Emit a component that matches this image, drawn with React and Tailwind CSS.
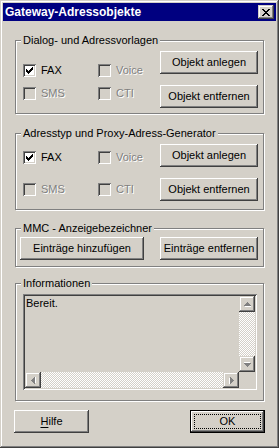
import React from 'react';

const raised =
  'shadow-[inset_-1px_-1px_#404040,inset_1px_1px_#fff,inset_-2px_-2px_#808080,inset_2px_2px_#d4d0c8]';
const sunken =
  'shadow-[inset_1px_1px_#808080,inset_-1px_-1px_#fff,inset_2px_2px_#404040,inset_-2px_-2px_#d4d0c8]';
const scrollBtn =
  'shadow-[inset_-1px_-1px_#404040,inset_1px_1px_#d4d0c8,inset_-2px_-2px_#808080,inset_2px_2px_#fff]';
const track =
  'bg-[conic-gradient(#fff_25%,#d4d0c8_0_50%,#fff_0_75%,#d4d0c8_0)] bg-[length:2px_2px]';

function Check({ label, checked, disabled }) {
  return (
    <div className="flex items-center gap-[5px] h-[13px]">
      <div className={`w-[13px] h-[13px] shrink-0 flex items-center justify-center ${sunken} ${disabled ? 'bg-[#d4d0c8]' : 'bg-white'}`}>
        {checked && (
          <svg width="7" height="7" viewBox="0 0 7 7" shapeRendering="crispEdges">
            <rect x="6" y="0" width="1" height="1" />
            <rect x="5" y="1" width="2" height="1" />
            <rect x="0" y="2" width="1" height="1" />
            <rect x="4" y="2" width="3" height="1" />
            <rect x="0" y="3" width="2" height="1" />
            <rect x="3" y="3" width="3" height="1" />
            <rect x="0" y="4" width="5" height="1" />
            <rect x="1" y="5" width="3" height="1" />
            <rect x="2" y="6" width="1" height="1" />
          </svg>
        )}
      </div>
      <span className={disabled ? 'text-[#808080] [text-shadow:1px_1px_#fff]' : 'text-black'}>{label}</span>
    </div>
  );
}

function Btn({ children, w = 'w-[98px]' }) {
  return (
    <div className={`${w} h-[23px] shrink-0 flex items-center justify-center bg-[#d4d0c8] ${raised}`}>
      <span>{children}</span>
    </div>
  );
}

function Group({ title, children }) {
  return (
    <fieldset className="border border-[#808080] shadow-[1px_1px_#fff,inset_1px_1px_#fff]">
      <legend className="ml-[5px] px-[2px] leading-[13px] bg-[#d4d0c8]">{title}</legend>
      {children}
    </fieldset>
  );
}

function ObjectGroup({ title, boxTop, rowGap, pb }) {
  return (
    <Group title={title}>
      <div className={`flex justify-between pt-[4px] pl-[7px] pr-[5px] ${pb}`}>
        <div className={`flex flex-col ${boxTop} ${rowGap}`}>
          <div className="flex">
            <div className="w-[75px]"><Check label="FAX" checked /></div>
            <Check label="Voice" disabled />
          </div>
          <div className="flex">
            <div className="w-[75px]"><Check label="SMS" disabled /></div>
            <Check label="CTI" disabled />
          </div>
        </div>
        <div className="flex flex-col gap-[11px]">
          <Btn>Objekt anlegen</Btn>
          <Btn>Objekt entfernen</Btn>
        </div>
      </div>
    </Group>
  );
}

function Arrow({ dir }) {
  const rot = { up: 0, down: 180, left: 270, right: 90 }[dir];
  return (
    <svg width="7" height="7" viewBox="0 0 7 7" shapeRendering="crispEdges" style={{ transform: `rotate(${rot}deg)` }}>
      <g fill="#fff" transform="translate(1 1)">
        <rect x="3" y="1" width="1" height="1" />
        <rect x="2" y="2" width="3" height="1" />
        <rect x="1" y="3" width="5" height="1" />
        <rect x="0" y="4" width="7" height="1" />
      </g>
      <g fill="#808080">
        <rect x="3" y="1" width="1" height="1" />
        <rect x="2" y="2" width="3" height="1" />
        <rect x="1" y="3" width="5" height="1" />
        <rect x="0" y="4" width="7" height="1" />
      </g>
    </svg>
  );
}

function SBtn({ dir }) {
  return (
    <div className={`w-[16px] h-[16px] bg-[#d4d0c8] flex items-center justify-center ${scrollBtn}`}>
      <Arrow dir={dir} />
    </div>
  );
}

export default function App() {
  return (
    <div
      className="w-[279px] h-[448px] bg-[#d4d0c8] p-[3px] flex flex-col text-[11px] leading-[13px] text-black shadow-[inset_-1px_-1px_#404040,inset_1px_1px_#d4d0c8,inset_-2px_-2px_#808080,inset_2px_2px_#fff]"
      style={{ fontFamily: '"Liberation Sans", Arial, sans-serif' }}
    >
      <div className="h-[18px] bg-[#000080] flex items-center justify-between pl-[2px] pr-[2px]">
        <span className="text-white font-bold text-[12px] leading-[14px]">Gateway-Adressobjekte</span>
        <div className={`w-[16px] h-[14px] bg-[#d4d0c8] flex items-center justify-center ${scrollBtn}`}>
          <svg width="8" height="7" viewBox="0 0 8 7" shapeRendering="crispEdges">
            <rect x="0" y="0" width="2" height="1" />
            <rect x="6" y="0" width="2" height="1" />
            <rect x="1" y="1" width="2" height="1" />
            <rect x="5" y="1" width="2" height="1" />
            <rect x="2" y="2" width="4" height="1" />
            <rect x="3" y="3" width="2" height="1" />
            <rect x="2" y="4" width="4" height="1" />
            <rect x="1" y="5" width="2" height="1" />
            <rect x="5" y="5" width="2" height="1" />
            <rect x="0" y="6" width="2" height="1" />
            <rect x="6" y="6" width="2" height="1" />
          </svg>
        </div>
      </div>

      <div className="flex flex-col px-[12px]">
        <div className="mt-[13px]">
          <ObjectGroup title="Dialog- und Adressvorlagen" boxTop="mt-[13px]" rowGap="gap-[10px]" pb="pb-[5px]" />
        </div>
        <div className="mt-[13px]">
          <ObjectGroup title="Adresstyp und Proxy-Adress-Generator" boxTop="mt-[7px]" rowGap="gap-[19px]" pb="pb-[8px]" />
        </div>
        <div className="mt-[12px]">
          <Group title="MMC - Anzeigebezeichner">
            <div className="flex justify-between pt-[2px] pb-[6px] pl-[4px] pr-[5px]">
              <Btn w="w-[124px]">Einträge hinzufügen</Btn>
              <Btn>Einträge entfernen</Btn>
            </div>
          </Group>
        </div>
        <div className="mt-[10px]">
          <Group title="Informationen">
            <div className="pt-[4px] pb-[10px] pl-[7px] pr-[6px]">
              <div className={`h-[96px] p-[2px] bg-[#d4d0c8] ${sunken}`}>
                <div className="grid grid-cols-[1fr_16px] grid-rows-[1fr_16px] h-full">
                  <div className="pl-[1px] pt-[1px]">Bereit.</div>
                  <div className="flex flex-col">
                    <SBtn dir="up" />
                    <div className={`flex-1 ${track}`} />
                    <SBtn dir="down" />
                  </div>
                  <div className="flex">
                    <SBtn dir="left" />
                    <div className={`flex-1 ${track}`} />
                    <SBtn dir="right" />
                  </div>
                  <div className="bg-[#d4d0c8]" />
                </div>
              </div>
            </div>
          </Group>
        </div>
        <div className="mt-[9px] -mx-[1px] flex justify-between">
          <Btn w="w-[75px]">
            <span className="underline underline-offset-[2px]">H</span>ilfe
          </Btn>
          <div className="w-[75px] h-[23px] border border-black bg-[#d4d0c8]">
            <div className={`w-full h-full p-[3px] ${raised}`}>
              <div className="w-full h-full border border-dotted border-black flex items-center justify-center">
                OK
              </div>
            </div>
          </div>
        </div>
      </div>
    </div>
  );
}
